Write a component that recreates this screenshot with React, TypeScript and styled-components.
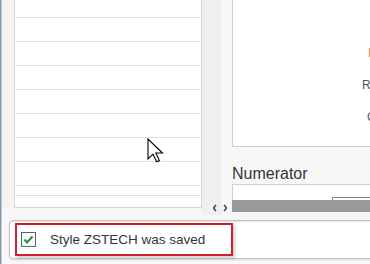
import styled, { createGlobalStyle } from "styled-components";

const GlobalStyle = createGlobalStyle`
    body {
        margin: 0;
        background: #f7f7f7;
        font-family: "Liberation Sans", Arial, sans-serif;
    }
`;

const Screen = styled.div`
    position: relative;
    display: flex;
    width: 370px;
    height: 264px;
    overflow: hidden;
    background: #f7f7f7;
`;

const EdgeStripe = styled.div`
    width: 2px;
    flex-shrink: 0;
    background: linear-gradient(to right, #8496ad 0 1px, #c3cedb 1px 2px);
`;

const Main = styled.div`
    display: flex;
    flex-direction: column;
    width: 368px;
`;

const Workspace = styled.div`
    display: flex;
    height: 215px;
`;

const RowGutter = styled.div`
    width: 12px;
    height: 208px;
    background: linear-gradient(to right, #eef2f6 0 3px, #f6f4f0 3px);
`;

const TablePanel = styled.div`
    box-sizing: border-box;
    width: 188px;
    height: 208px;
    background: #fff;
    border: 1px solid #d6d6d6;
    border-top: none;
    display: flex;
    flex-direction: column;
`;

const TableRow = styled.div<{ $height: number }>`
    box-sizing: border-box;
    height: ${(p) => p.$height}px;
    margin: 0 1px;
    border-bottom: 1px solid #e0e0e0;
`;

const SplitGutter = styled.div`
    width: 30px;
    display: flex;
    flex-direction: column;
    justify-content: flex-end;
    padding: 0 0 3px 10px;
    box-sizing: border-box;
    background: linear-gradient(to right, #efefef 0 20px, #f7f7f7 20px);
`;

const RightColumn = styled.div`
    width: 138px;
    display: flex;
    flex-direction: column;
    background: #f7f7f7;
`;

const DetailPanel = styled.div`
    box-sizing: border-box;
    height: 147px;
    background: #fff;
    border-left: 1px solid #cfcfcf;
    border-bottom: 1px solid #cfcfcf;
    padding-top: 37px;
    overflow: hidden;
    display: flex;
    flex-direction: column;
`;

const FieldLabel = styled.div<{ $indent: number; $accent?: boolean }>`
    padding-left: ${(p) => p.$indent}px;
    height: 32px;
    line-height: 32px;
    font-size: 12px;
    white-space: nowrap;
    color: ${(p) => (p.$accent ? "#d08a4c" : "#555")};
`;

const SectionLabel = styled.div`
    margin-top: 18px;
    height: 19px;
    line-height: 18px;
    font-size: 16px;
    color: #32363a;
`;

const InputBox = styled.div`
    box-sizing: border-box;
    height: 16px;
    background: #fff;
    border-top: 1px solid #cfcfcf;
    border-left: 1px solid #cfcfcf;
    display: flex;
    align-items: flex-end;
`;

const InputTab = styled.div`
    margin-left: 99px;
    flex: 1;
    height: 2px;
    border-top: 1px solid #8a8a8a;
    border-left: 1px solid #8a8a8a;
`;

const ProgressBar = styled.div`
    height: 12px;
    background: #999;
`;

const MessageArea = styled.div`
    padding: 5px 0 0 7px;
`;

const MessageBox = styled.div`
    box-sizing: border-box;
    height: 39px;
    margin-right: -6px;
    background: #fff;
    border: 1px solid #c4c4c4;
    border-radius: 4px;
    box-shadow: inset 0 1px 0 #e6e6e6, 0 1px 2px rgba(0, 0, 0, 0.12);
    padding: 2px 0 0 5px;
`;

const Highlight = styled.div`
    box-sizing: border-box;
    width: 218px;
    height: 33px;
    border: 2px solid #c9202b;
    box-shadow: 2px 2px 3px rgba(0, 0, 0, 0.2);
    display: flex;
    align-items: center;
    padding-left: 4px;
    gap: 14px;
`;

const CheckBox = styled.div`
    box-sizing: border-box;
    width: 15px;
    height: 15px;
    border: 1px solid #4f6b66;
    background: #fbfdfc;
    display: flex;
    align-items: center;
    justify-content: center;
`;

const MessageText = styled.span`
    font-size: 13.5px;
    color: #32363a;
    white-space: nowrap;
`;

const Cursor = styled.svg`
    position: absolute;
    left: 147px;
    top: 138px;
`;

const rowHeights = [18, 24, 24, 24, 24, 24, 24, 24, 10];

function App() {
    return (
        <>
            <GlobalStyle />
            <Screen>
                <EdgeStripe />
                <Main>
                    <Workspace>
                        <RowGutter />
                        <TablePanel>
                            {rowHeights.map((h, i) => (
                                <TableRow key={i} $height={h} />
                            ))}
                        </TablePanel>
                        <SplitGutter>
                            <svg width="16" height="8" viewBox="0 0 16 8">
                                <polyline points="4,1 1.5,4 4,7" fill="none" stroke="#2d3a48" strokeWidth="1.3" />
                                <polyline points="12,1 14.5,4 12,7" fill="none" stroke="#2d3a48" strokeWidth="1.3" />
                            </svg>
                        </SplitGutter>
                        <RightColumn>
                            <DetailPanel>
                                <FieldLabel $indent={135} $accent>
                                    I
                                </FieldLabel>
                                <FieldLabel $indent={129}>Ready</FieldLabel>
                                <FieldLabel $indent={134}>Cond</FieldLabel>
                            </DetailPanel>
                            <SectionLabel>Numerator</SectionLabel>
                            <InputBox>
                                <InputTab />
                            </InputBox>
                            <ProgressBar />
                        </RightColumn>
                    </Workspace>
                    <MessageArea>
                        <MessageBox>
                            <Highlight>
                                <CheckBox>
                                    <svg width="11" height="9" viewBox="0 0 11 9">
                                        <polyline points="1.5,4.5 4,7.5 9.5,1.5" fill="none" stroke="#2a8a3a" strokeWidth="2" />
                                    </svg>
                                </CheckBox>
                                <MessageText>Style ZSTECH was saved</MessageText>
                            </Highlight>
                        </MessageBox>
                    </MessageArea>
                </Main>
                <Cursor width="17" height="25" viewBox="0 0 17 25">
                    <path
                        d="M1 1 L1 21 L6 16.2 L9.6 23.8 L12.4 22.6 L8.9 15 L15.5 15 Z"
                        fill="#fff"
                        stroke="#000"
                        strokeWidth="1.1"
                        strokeLinejoin="miter"
                    />
                </Cursor>
            </Screen>
        </>
    );
}

export default App;
